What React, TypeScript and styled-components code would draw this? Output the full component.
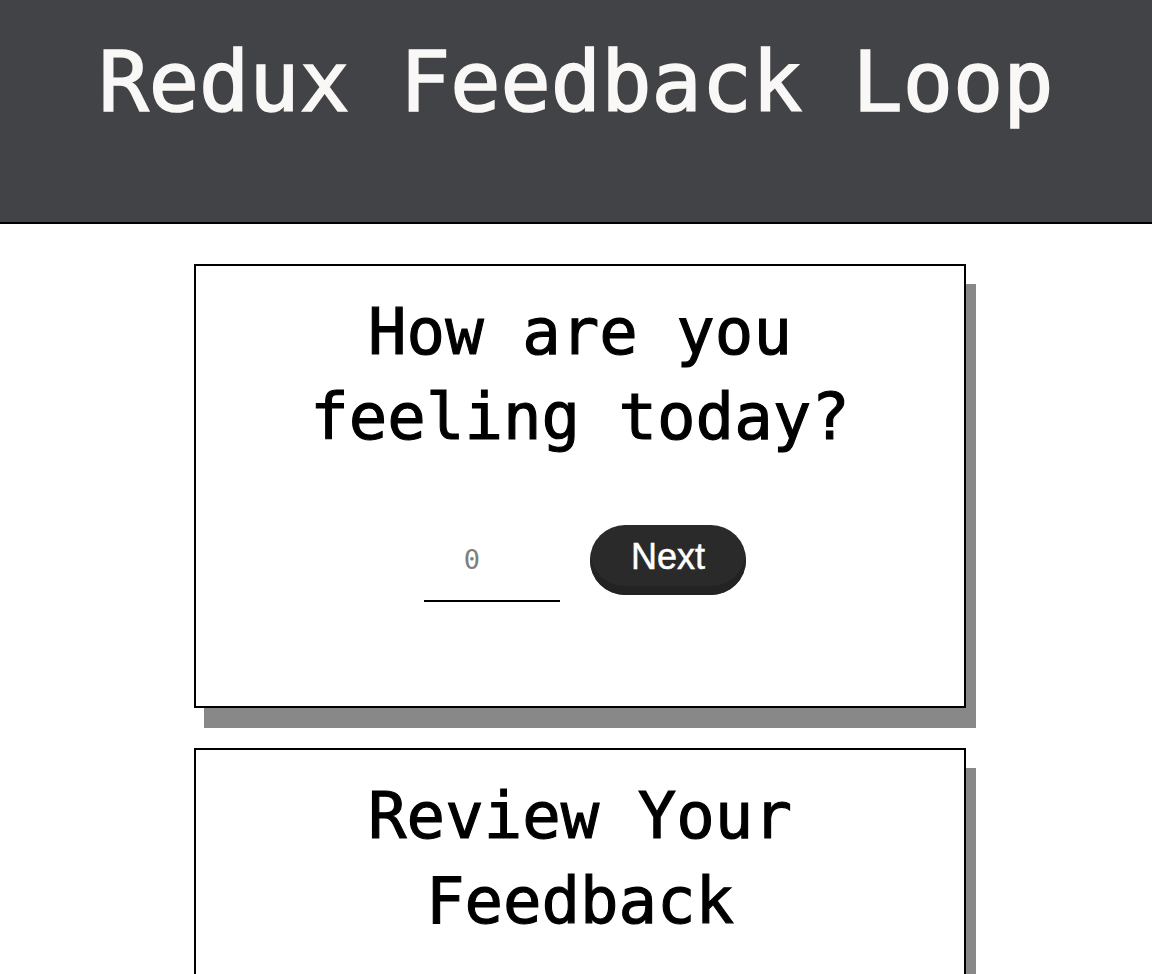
import React from "react";
import styled, { createGlobalStyle } from "styled-components";

const GlobalStyle = createGlobalStyle`
  html, body {
    margin: 0;
    padding: 0;
    background: #ffffff;
  }
  body {
    font-family: "DejaVu Sans Mono", "Liberation Mono", monospace;
  }
  * {
    box-sizing: border-box;
  }
`;

const Header = styled.header`
  background: #424347;
  border-bottom: 2px solid #000000;
  padding: 32px 0 90px;
  box-sizing: content-box;
`;

const HeaderTitle = styled.h1`
  margin: 0;
  color: #f9f8f6;
  font-family: "DejaVu Sans Mono", "Liberation Mono", monospace;
  font-size: 83.5px;
  font-weight: 400;
  line-height: 100px;
  text-align: center;
  -webkit-text-stroke: 1.6px #f9f8f6;
`;

const Main = styled.main`
  display: flex;
  flex-direction: column;
  align-items: center;
  gap: 40px;
  padding: 40px 0 60px 8px;
`;

const Card = styled.section<{ $bottom: number }>`
  width: 772px;
  background: #ffffff;
  border: 2px solid #000000;
  box-shadow: 10px 20px 0 #888888;
  padding: 24px 40px ${(p) => p.$bottom}px;
`;

const CardTitle = styled.h2`
  margin: 0;
  font-family: "DejaVu Sans Mono", "Liberation Mono", monospace;
  font-size: 64px;
  font-weight: 400;
  line-height: 85px;
  text-align: center;
  color: #000000;
  -webkit-text-stroke: 1.1px #000000;
`;

const Row = styled.div`
  display: flex;
  align-items: center;
  justify-content: center;
  gap: 30px;
  margin-top: 58px;
  padding-left: 10px;
`;

const NumberInput = styled.input`
  width: 136px;
  height: 84px;
  border: none;
  border-bottom: 2px solid #000000;
  outline: none;
  background: transparent;
  padding: 0 40px 0 0;
  font-family: "DejaVu Sans Mono", "Liberation Mono", monospace;
  font-size: 27px;
  text-align: center;
  color: #000000;
  -moz-appearance: textfield;

  &::placeholder {
    color: #7e7e7e;
  }
  &::-webkit-inner-spin-button,
  &::-webkit-outer-spin-button {
    -webkit-appearance: none;
    margin: 0;
  }
`;

const NextButton = styled.button`
  width: 156px;
  height: 70px;
  display: flex;
  align-items: center;
  justify-content: center;
  padding: 0 0 7px;
  border: none;
  border-radius: 35px;
  background: #2a2a2a;
  box-shadow: inset 0 -9px 0 #232323;
  color: #ffffff;
  font-family: "Liberation Sans", Arial, sans-serif;
  font-size: 36px;
  -webkit-text-stroke: 0.5px #ffffff;
  cursor: pointer;
`;

const App: React.FC = () => {
  return (
    <>
      <GlobalStyle />
      <Header>
        <HeaderTitle>Redux Feedback Loop</HeaderTitle>
      </Header>
      <Main>
        <Card $bottom={104}>
          <CardTitle>How are you feeling today?</CardTitle>
          <Row>
            <NumberInput type="number" placeholder="0" />
            <NextButton type="button">Next</NextButton>
          </Row>
        </Card>
        <Card $bottom={120}>
          <CardTitle>Review Your Feedback</CardTitle>
        </Card>
      </Main>
    </>
  );
};

export default App;
